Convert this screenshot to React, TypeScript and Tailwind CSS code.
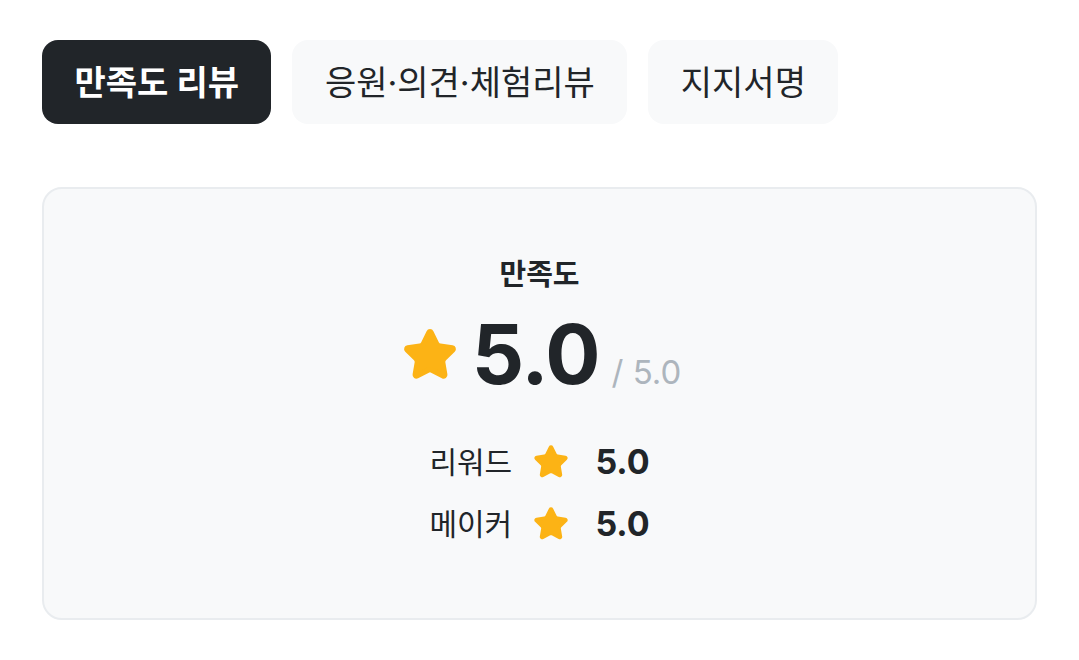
import { Star } from "lucide-react";

const FONT = "font-['Inter','Noto_Sans_CJK_KR',sans-serif]";

const tabs = [
  { label: "만족도 리뷰", active: true },
  { label: "응원·의견·체험리뷰", active: false },
  { label: "지지서명", active: false },
];

const rows = [
  { label: "리워드", score: "5.0" },
  { label: "메이커", score: "5.0" },
];

function StarIcon({ size }: { size: number }) {
  return (
    <Star
      size={size}
      fill="#FCB315"
      stroke="#FCB315"
      strokeWidth={2.2}
      strokeLinejoin="round"
    />
  );
}

export default function App() {
  return (
    <div className={`${FONT} min-h-[660px] bg-white px-[42px] pt-[40px] text-[#212529]`}>
      {/* Tabs */}
      <div className="flex gap-[21px]">
        {tabs.map((t) => (
          <button
            key={t.label}
            className={
              t.active
                ? "flex h-[84px] items-center rounded-[16px] bg-[#212529] px-[32.5px] text-[34px] font-bold text-white"
                : "flex h-[84px] items-center rounded-[16px] bg-[#f8f9fa] px-[32.5px] text-[34px] text-[#212529]"
            }
          >
            {t.label}
          </button>
        ))}
      </div>

      {/* Rating card */}
      <div className="mt-[63px] flex h-[433px] flex-col items-center rounded-[20px] border-2 border-[#e9ecef] bg-[#f8f9fa] pt-[66px]">
        <p className="text-[29px] leading-[40px] font-bold">만족도</p>
        <div className="mt-[15px] flex items-center pl-[4px]">
          <StarIcon size={56} />
          <div className="ml-[14px] flex items-baseline">
            <span className="text-[82px] leading-[90px] font-bold tracking-[-1px]">5.0</span>
            <span className="ml-[12px] text-[33px] leading-[40px] text-[#adb5bd]">/ 5.0</span>
          </div>
        </div>
        <div className="mt-[42px] flex flex-col gap-[22px]">
          {rows.map((r) => (
            <div key={r.label} className="flex items-center">
              <span className="w-[104px] text-[30px] leading-[40px]">{r.label}</span>
              <StarIcon size={36} />
              <span className="ml-[26px] text-[34px] leading-[40px] font-bold">{r.score}</span>
            </div>
          ))}
        </div>
      </div>
    </div>
  );
}
